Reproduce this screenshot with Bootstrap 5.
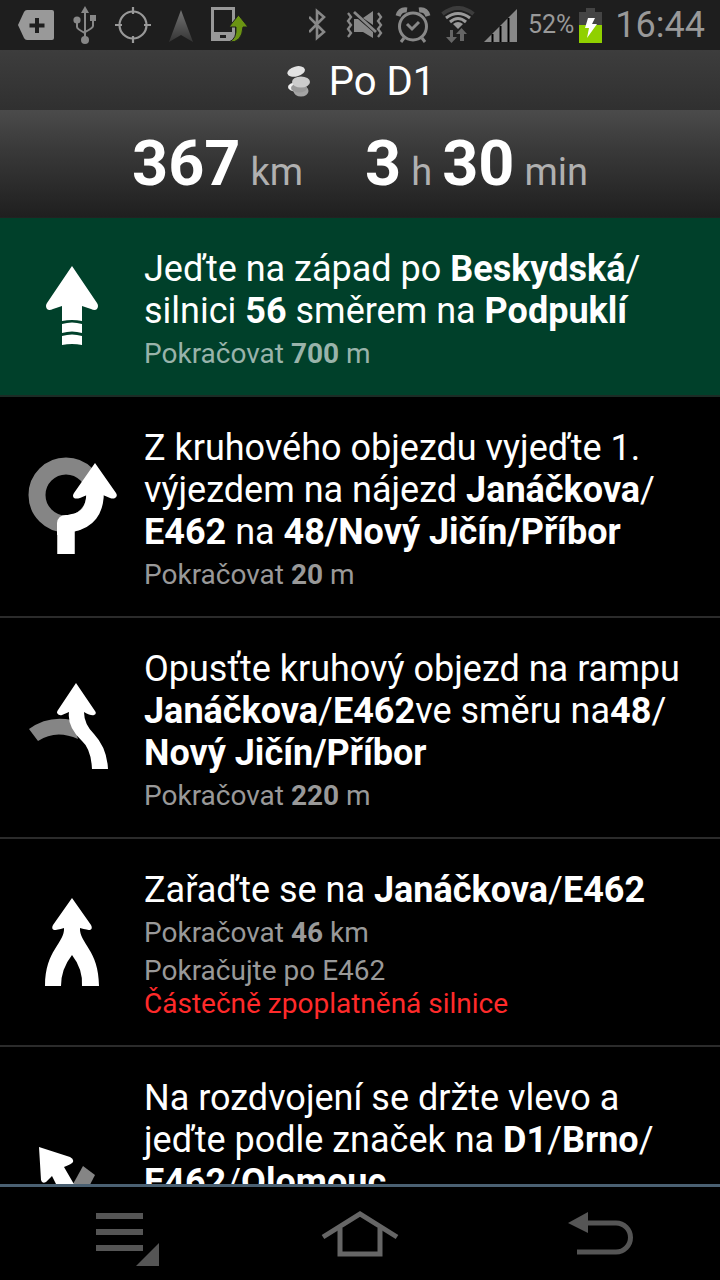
<!DOCTYPE html>
<html lang="cs">
<head>
<meta charset="utf-8">
<meta name="viewport" content="width=device-width, initial-scale=1">
<title>Po D1</title>
<link href="https://cdn.jsdelivr.net/npm/bootstrap@5.3.0/dist/css/bootstrap.min.css" rel="stylesheet">
<style>
  body { font-family: Roboto, "Noto Sans", sans-serif; background: #000; color: #fff; }
  svg { display: block; flex: none; }
  .status-bar { height: 50px; background: #1e1e1e; color: #999; padding: 0 15px 0 18px; }
  .status-left { gap: 18px; }
  .battery-level { font-size: 25px; line-height: 30px; margin: 0 5px 0 7px; }
  .clock { font-size: 36px; line-height: 44px; margin-left: 13px; }
  .route-name { height: 60px; padding-top: 4px; background: linear-gradient(#3d3d3d, #303030); gap: 18px; }
  .route-name h1 { font-size: 40px; line-height: 48px; font-weight: 400; }
  .totals { height: 108px; background: linear-gradient(#4b4b4b, #3a3a3a 35%, #1f1f1f); gap: 62px; border-bottom: 1px solid #222; }
  .total { gap: 10px; }
  .totals b { font-size: 63px; line-height: 76px; font-weight: 700; }
  .totals span { font-size: 38px; line-height: 48px; color: #b0b0b0; }
  .step { border-bottom: 2px solid #2b2b2b; padding: 30px 0 25px; }
  .step-current { background: #00402a; border-color: #1c2b25; }
  .step-clipped { min-height: 296px; }
  .step-list { min-height: 0; }
  .step-icon { width: 144px; margin: -30px 0 -25px; }
  .step h2 { font-size: 36px; line-height: 42px; font-weight: 400; margin: 0 0 5px; white-space: nowrap; }
  .step p { font-size: 28px; line-height: 33px; color: #999; margin: 0; }
  .step p.via { margin-top: 5px; }
  .step-current p { color: #99b3aa; }
  .step p.toll { color: #ff2a2a; }
  .nav-keys { height: 96px; border-top: 3px solid #4a6072; padding-top: 6px; }
</style>
</head>
<body>
<div class="d-flex flex-column vh-100 overflow-hidden">

  <div class="status-bar d-flex flex-shrink-0 align-items-center justify-content-between">
    <div class="status-left d-flex align-items-center">
      <svg width="37" height="36" viewBox="0 0 37 36" aria-hidden="true"><path d="M9 3H34Q36 3 36 5V31Q36 33 34 33H9Q7 33 6 31L0 18L6 5Q7 3 9 3Z" fill="#999"/><path d="M19 11V26M11.500 18.500H26.500" stroke="#1e1e1e" stroke-width="4"/></svg>
      <svg width="24" height="40" viewBox="0 0 24 40" aria-hidden="true" fill="#888" stroke="#888"><path d="M12 6V34M4 15V22Q4 24 12 28M20 14V21Q20 23 12 27" fill="none" stroke-width="2"/><path d="M12 1L16 8H8Z" stroke="none"/><circle cx="4" cy="15" r="3.600" stroke="none"/><path d="M17 10H23V16H17Z" stroke="none"/><circle cx="12" cy="35" r="4" stroke="none"/></svg>
      <svg width="36" height="36" viewBox="0 0 36 36" aria-hidden="true" fill="none" stroke="#999" stroke-width="2.200"><circle cx="18" cy="18" r="13.500"/><path d="M18 0V7M18 29V36M0 18H7M29 18H36"/></svg>
      <svg width="24" height="36" viewBox="0 0 24 36" aria-hidden="true"><defs><linearGradient id="cone" x1="0" y1="0" x2="0" y2="1"><stop offset="0" stop-color="#747474"/><stop offset="1" stop-color="#343434"/></linearGradient></defs><path d="M12 3L24 35L12 28L0 35Z" fill="url(#cone)"/></svg>
      <svg width="37" height="36" viewBox="0 0 37 36" aria-hidden="true"><path fill-rule="evenodd" d="M0 0H24V34H0ZM3 3V25H21V3ZM9 28V31H15V28Z" fill="#999"/><path d="M27.500 8L37 20H32Q31 36 18 35Q26 32 25 20H18Z" fill="#6b9413" stroke="#1e1e1e"/></svg>
    </div>
    <div class="d-flex align-items-center">
      <svg class="me-3" width="24" height="36" viewBox="0 0 24 36" aria-hidden="true" fill="none" stroke="#888" stroke-width="2.600"><path d="M0 10L15 25L8 31V4L15 10L0 25"/></svg>
      <svg width="38" height="30" viewBox="3 0 38 30" aria-hidden="true" overflow="visible"><path d="M8 9H12L27 22V28L17 22H8ZM17 8L27 1V15Z" fill="#888"/><path d="M8 2L30 22" stroke="#888" stroke-width="2.800"/><path d="M2 3L5 7L2 11L5 15L2 19L5 23L2 27M32 3L35 7L32 11L35 15L32 19L35 23L32 27" stroke="#888" stroke-width="2.300" fill="none"/></svg>
      <svg class="ms-2" width="36" height="36" viewBox="1 0 36 36" aria-hidden="true" fill="none" stroke="#888"><circle cx="19" cy="19.500" r="13.500" stroke-width="3"/><path d="M13 17L18 22L25 15" stroke-width="3"/><path d="M4 9Q6 2 13 3M25 3Q32 2 34 9" stroke-width="5"/><path d="M10 31L7 35M28 31L31 35" stroke-width="3"/></svg>
      <svg class="ms-2" width="36" height="38" viewBox="0 0 36 38" aria-hidden="true" fill="none"><path d="M3.500 8Q19 -4 34.500 8" stroke="#3c3c3c" stroke-width="4"/><path d="M7 12Q19 3 31 12M11 16Q19 9 27 16" stroke="#999" stroke-width="3"/><path d="M14 18Q19 14 24 18L19 23Z" fill="#999"/><path d="M14 24V31H18L12.500 37L7 31H11V24ZM21 35V28H17L22.500 22L28 28H25V35Z" fill="#666"/></svg>
      <svg class="ms-2 me-1" width="34" height="34" viewBox="0 0 34 34" aria-hidden="true"><path d="M1 34L34 1V34Z" fill="#888"/><path d="M9.500 26V34M17.500 18V34M25.500 10V34" stroke="#000" stroke-width="2"/></svg>
      <span class="battery-level">52%</span>
      <svg width="23" height="35" viewBox="0 0 23 35" aria-hidden="true"><path d="M7 0H16V4H23V17H0V4H7Z" fill="#444"/><path d="M0 17H23V35H0Z" fill="#90d000"/><path d="M9 10H16L13 16H18L8 30L10 20H6Z" fill="#fff"/></svg>
      <span class="clock">16:44</span>
    </div>
  </div>

  <header class="flex-shrink-0">
    <div class="route-name d-flex align-items-center justify-content-center">
      <svg width="26" height="34" viewBox="0 0 26 34" aria-hidden="true"><ellipse cx="16" cy="26" rx="7.500" ry="5.500" fill="#a5a5a5"/><ellipse cx="11" cy="22" rx="8" ry="4.500" fill="#eee"/><ellipse cx="14" cy="23" rx="8" ry="4.500" fill="#999"/><ellipse cx="16" cy="17" rx="9" ry="5.500" fill="#ccc"/><ellipse cx="11" cy="6.500" rx="9" ry="5" transform="rotate(-15 11 6)" fill="#e3e3e3"/></svg>
      <h1 class="m-0">Po D1</h1>
    </div>
    <div class="totals d-flex align-items-center justify-content-center">
      <div class="total d-flex align-items-baseline"><b>367</b><span>km</span></div>
      <div class="total d-flex align-items-baseline"><b>3</b><span>h</span><b>30</b><span>min</span></div>
    </div>
  </header>

  <ol class="step-list list-unstyled m-0 flex-fill overflow-hidden">
    <li class="step step-current d-flex align-items-center">
      <div class="step-icon d-flex justify-content-center"><svg width="96" height="96" viewBox="24 259 96 96" aria-hidden="true" fill="#fff"><path d="M72 266L97 303Q99 306 97 309Q95 311 91 309L82 306V321Q72 319 62 321V306L53 309Q49 311 47 309Q45 306 47 303ZM62 324Q72 321 82 324V333Q72 330 62 333ZM62 336Q72 333 82 336V345Q72 343 62 345Z"/></svg></div>
      <div>
        <h2>Jeďte na západ po <b>Beskydská</b>/<br>silnici <b>56</b> směrem na <b>Podpuklí</b></h2>
        <p>Pokračovat <b>700</b> m</p>
      </div>
    </li>
    <li class="step d-flex align-items-center">
      <div class="step-icon d-flex justify-content-center"><svg width="96" height="96" viewBox="24 459 96 96" overflow="visible" aria-hidden="true"><circle cx="66" cy="495" r="29" fill="none" stroke="#858585" stroke-width="17"/><path d="M66 554V530Q66 524 72 523Q95 519 95 493" fill="none" stroke="#fff" stroke-width="17.500"/><path d="M95 463L116 493Q118 496 115 498Q113 499 110 498L103 495H87L80 498Q76 499 74 498Q72 496 74 493Z" fill="#fff"/><path d="M57 535V523Q58 515 66 515H75L70 534Z" fill="#fff"/></svg></div>
      <div>
        <h2>Z kruhového objezdu vyjeďte 1.<br>výjezdem na nájezd <b>Janáčkova</b>/<br><b>E462</b> na <b>48/Nový Jičín/Příbor</b></h2>
        <p>Pokračovat <b>20</b> m</p>
      </div>
    </li>
    <li class="step d-flex align-items-center">
      <div class="step-icon d-flex justify-content-center"><svg width="96" height="96" viewBox="24 680 96 96" aria-hidden="true"><path d="M29 729Q48 715 72 720L78 739Q56 729 38 741Z" fill="#858585"/><path d="M76 683L95 711Q97 714 94 715Q91 716 84 712Q84 724 94 734Q107 748 108 769H92Q91 749 82 741Q67 727 69 712L62 715Q59 716 57 713Q57 711 58 710Z" fill="#fff"/></svg></div>
      <div>
        <h2>Opusťte kruhový objezd na rampu<br><b>Janáčkova</b>/<b>E462</b>ve směru na<b>48</b>/<br><b>Nový Jičín/Příbor</b></h2>
        <p>Pokračovat <b>220</b> m</p>
      </div>
    </li>
    <li class="step d-flex align-items-center">
      <div class="step-icon d-flex justify-content-center"><svg width="96" height="96" viewBox="24 894 96 96" aria-hidden="true"><path d="M72 898L91 925Q93 929 90 930Q88 930 80 928C79 943 99 950 99 986H82Q83 969 72 955Q61 969 61 986H45C45 950 65 943 64 928Q57 930 54 930Q51 929 53 925Z" fill="#fff"/></svg></div>
      <div>
        <h2>Zařaďte se na <b>Janáčkova</b>/<b>E462</b></h2>
        <p>Pokračovat <b>46</b> km</p>
        <p class="via">Pokračujte po E462</p>
        <p class="toll">Částečně zpoplatněná silnice</p>
      </div>
    </li>
    <li class="step step-clipped d-flex">
      <div class="step-icon d-flex align-items-center justify-content-center"><svg width="96" height="96" viewBox="24 1146 96 96" aria-hidden="true"><path d="M83 1166L95 1175L80 1204H62Z" fill="#858585"/><path d="M39 1147L70 1157Q74 1159 73 1162Q72 1164 64 1167L82 1198V1241H64V1200L52 1176L46 1182Q42 1184 41 1180Z" fill="#fff"/></svg></div>
      <div>
        <h2>Na rozdvojení se držte vlevo a<br>jeďte podle značek na <b>D1</b>/<b>Brno</b>/<br><b>E462</b>/<b>Olomouc</b></h2>
      </div>
    </li>
  </ol>

  <nav class="nav-keys d-flex flex-shrink-0" aria-label="Systém">
    <button class="btn border-0 flex-fill w-100 p-0 d-flex align-items-center justify-content-center" type="button" aria-label="Nabídka"><svg width="80" height="60" viewBox="0 0 80 60" aria-hidden="true" fill="#555"><path d="M16 6H63V12H16ZM16 22H63V28H16ZM16 38H63V44H16ZM79 36V59H56Z"/></svg></button>
    <button class="btn border-0 flex-fill w-100 p-0 d-flex align-items-center justify-content-center" type="button" aria-label="Domů"><svg width="80" height="60" viewBox="0 0 80 60" aria-hidden="true" fill="none" stroke="#666" stroke-width="5"><path d="M3 30L40 7L77 30"/><path d="M20 21V47H60V21"/></svg></button>
    <button class="btn border-0 flex-fill w-100 p-0 d-flex align-items-center justify-content-center" type="button" aria-label="Zpět"><svg width="80" height="60" viewBox="0 0 80 60" aria-hidden="true"><path d="M26 16H56A14 14 0 0 1 56 45H17" fill="none" stroke="#555" stroke-width="5"/><path d="M8 16L28 5V26Z" fill="#555"/></svg></button>
  </nav>
</div>
<script src="https://cdn.jsdelivr.net/npm/bootstrap@5.3.0/dist/js/bootstrap.bundle.min.js"></script>
</body>
</html>
